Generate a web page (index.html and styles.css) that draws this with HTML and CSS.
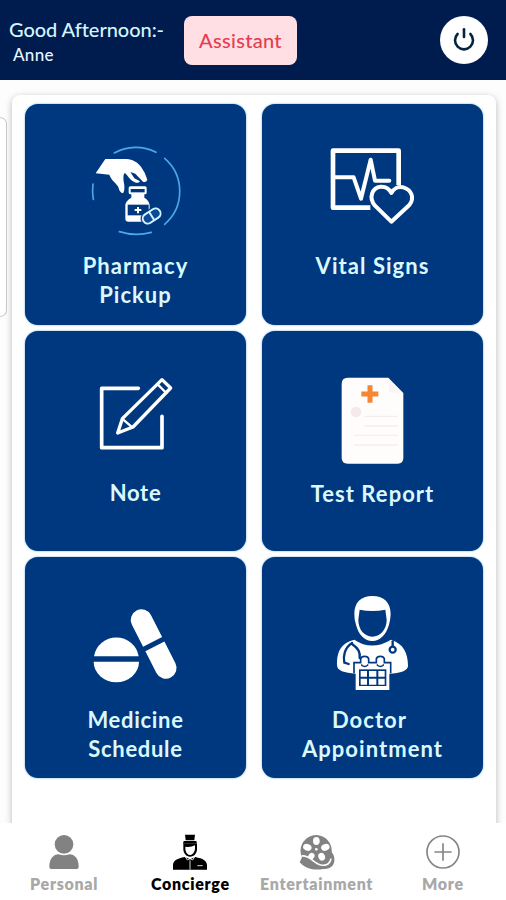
FILE: index.html
```html
<!DOCTYPE html>
<html lang="en">
<head>
    <meta charset="utf-8">
    <title>Concierge</title>
    <link rel="stylesheet" href="styles.css">
</head>
<body>
    <header class="header">
        <div class="greeting">
            <div class="greeting-text">Good Afternoon:-</div>
            <div class="greeting-name">Anne</div>
        </div>
        <button class="assistant-button">Assistant</button>
        <button class="power-button" aria-label="Log out">
            <svg width="24" height="26" viewBox="0 0 24 26" fill="none" stroke="#06233f" stroke-width="2.6" stroke-linecap="round">
                <path d="M12 2.3V10"/>
                <path d="M5.6 7a9 9 0 1 0 12.8 0"/>
            </svg>
        </button>
    </header>

    <main class="main">
        <div class="side-card"></div>
        <div class="panel">
            <a class="tile">
                <svg class="tile-icon" viewBox="15 21 303 300">
                    <g fill="none" stroke="#4aa8e8" stroke-width="5" stroke-linecap="round">
                        <path d="M103 54A131 131 0 0 1 228 52"/>
                        <path d="M254 70A131 131 0 0 1 254 268"/>
                        <path d="M118 290A170 170 0 0 0 214 292"/>
                        <path d="M39 147Q36 170 40 193"/>
                    </g>
                    <path fill="#fff" d="M47 115L76 72H140C158 73 174 82 184 97Q197 115 202 134Q199 143 189 140L166 116L151 111L163 130L180 139Q175 147 163 141C148 133 144 122 134 113Q127 123 133 151Q134 170 129 175Q119 174 115 156C108 143 94 137 88 119Z"/>
                    <path fill="#fff" d="M151 154H195Q200 154 200 159V173Q200 178 195 178H193V188Q208 197 209 211V252Q209 260 201 260H145Q136 260 136 251V209Q138 197 154 188V178H151Q146 178 146 173V159Q146 154 151 154Z"/>
                    <path stroke="#003880" stroke-width="10" d="M152 167H194"/>
                    <path fill="#003880" d="M143 209H206V241H143Z"/>
                    <path stroke="#fff" stroke-width="6" d="M174 216V235M164 225H184"/>
                    <g transform="rotate(-33 215 243)" stroke="#003880">
                        <rect x="180" y="222" width="70" height="42" rx="21" fill="#003880"/>
                        <rect x="186" y="228" width="58" height="30" rx="15" fill="#0b4a96" stroke="#d5f3ff" stroke-width="6"/>
                        <path stroke="#d5f3ff" stroke-width="6" d="M215 228V258"/>
                    </g>
                </svg>
                <span class="tile-label">Pharmacy<br>Pickup</span>
            </a>
            <a class="tile">
                <svg class="tile-icon" viewBox="6 21 303 300" fill="none" stroke="#fff" stroke-width="12" stroke-linejoin="round" stroke-linecap="round">
                    <path stroke-width="14" stroke-linecap="butt" d="M151 218H39V47H236V150"/>
                    <path d="M40 127H101L123 191L152 74L165 137H208"/>
                    <path fill="#003880" d="M214 260L165 212C145 188 156 158 182 155C200 154 209 163 214 174C220 162 233 153 250 157C276 165 284 190 268 210Z"/>
                </svg>
                <span class="tile-label">Vital Signs</span>
            </a>
            <a class="tile">
                <svg class="tile-icon" viewBox="0 12 303 300" fill="none" stroke="#fff" stroke-width="11" stroke-linejoin="round" stroke-linecap="round">
                    <path d="M160 70H50V248H231V154"/>
                    <path stroke-width="10" d="M231 44L257 69L144 186L98 204L112 161Z"/>
                    <path stroke-width="7" d="M218 58L244 84M114 163L142 187"/>
                </svg>
                <span class="tile-label tile-label-narrow">Note</span>
            </a>
            <a class="tile">
                <svg class="tile-icon" viewBox="-9 12 303 300">
                    <path fill="#fffdfc" d="M68 38H190L235 84V279Q235 296 218 296H68Q50 296 50 279V57Q50 38 68 38Z"/>
                    <path fill="#faf5f5" d="M191 46L228 83H202Q191 83 191 72Z"/>
                    <path stroke="#f58634" stroke-width="15" d="M135 61V113M109 87H160"/>
                    <circle cx="93" cy="141" r="16" fill="#f6e9ea"/>
                    <path stroke="#f5eeec" stroke-width="4" d="M118 154H218M118 183H218M86 211H218M86 240H218"/>
                </svg>
                <span class="tile-label tile-label-low">Test Report</span>
            </a>
            <a class="tile">
                <svg class="tile-icon" viewBox="15 0 303 300" fill="#fff">
                    <path d="M42 184A68 68 0 0 1 176 184Z"/>
                    <path d="M41 200H177A68 62 0 0 1 41 200Z"/>
                    <g transform="rotate(-27 221 147)">
                        <path d="M189 140V66A32 32 0 0 1 253 66V140Z"/>
                        <path d="M189 155V228A32 32 0 0 0 253 228V155Z"/>
                    </g>
                </svg>
                <span class="tile-label tile-label-low tile-label-narrow">Medicine<br>Schedule</span>
            </a>
            <a class="tile">
                <svg class="tile-icon" viewBox="6 15 303 300">
                    <path fill="#fff" d="M51 225C51 184 62 160 103 149Q155 184 213 149C250 160 264 190 264 227C264 242 242 249 207 251H108C72 249 51 242 51 225Z"/>
                    <path fill="#fff" d="M103 73C103 37 122 18 157 18C193 18 212 38 212 73Q211 91 207 104C199 132 182 152 157 153C132 152 115 132 108 104Q103 91 103 73Z"/>
                    <path fill="#003880" d="M119 59Q157 67 196 59L200 89C200 120 180 139 157 140C133 139 115 119 115 89Z"/>
                    <g fill="none" stroke="#003880" stroke-width="7" stroke-linecap="round">
                        <path d="M96 159C73 174 69 199 73 218L86 222M96 162C116 176 121 187 119 204"/>
                        <path d="M218 154V168"/>
                        <circle cx="218" cy="179" r="9"/>
                    </g>
                    <path fill="none" stroke="#003880" stroke-width="5" d="M102 250V218H122V206Q124 199 134 199Q144 199 146 206V218H169V206Q171 199 181 199Q191 199 193 206V218H212V250"/>
                    <path fill="#fff" d="M107 223H208V300H107Z"/>
                    <rect x="127" y="203" width="14" height="25" rx="6" fill="#fff"/>
                    <rect x="174" y="203" width="14" height="25" rx="6" fill="#fff"/>
                    <path fill="none" stroke="#003880" stroke-width="4" d="M125 223V226Q134 233 143 226V223M172 223V226Q181 233 190 226V223"/>
                    <path fill="#003880" d="M117 238H199V288H117Z"/>
                    <path fill="#fff" d="M122 243H141V260H122ZM147 243H169V260H147ZM175 243H194V260H175ZM122 266H141V284H122ZM147 266H169V284H147ZM175 266H194V284H175Z"/>
                </svg>
                <span class="tile-label tile-label-low">Doctor&nbsp;<br>Appointment</span>
            </a>
        </div>
    </main>

    <nav class="nav">
        <a class="nav-item">
            <svg class="nav-icon" viewBox="0 0 108 108" fill="#828282">
                <circle cx="54" cy="31" r="28"/>
                <path d="M10 98C10 75 22 61 38 61Q54 67 70 61C87 61 98 75 98 98Q98 105 90 105H18Q10 105 10 98Z"/>
            </svg>
            <span>Personal</span>
        </a>
        <a class="nav-item active">
            <svg class="nav-icon" viewBox="0 0 108 108">
                <path d="M39 2H69L67 19H41ZM35 21H73L75 29H33Z"/>
                <path d="M34 29H75V45C75 58 66 68 54 68C43 68 34 58 34 45Z"/>
                <path fill="#fff" d="M40 38Q54 42 69 34V44C68 55 61 63 54 63C46 63 40 54 40 43Z"/>
                <path d="M3 107V93C4 79 16 73 38 69L54 76L70 69C93 74 104 80 105 93V107Z"/>
                <path fill="none" stroke="#fff" stroke-width="2.5" d="M39 67L46 78L54 74L62 78L69 67M54 79V107M76 95H92"/>
            </svg>
            <span>Concierge</span>
        </a>
        <a class="nav-item">
            <svg class="nav-icon" viewBox="0 0 108 108">
                <path fill="#828282" d="M52 3A47 47 0 0 1 98 54C107 64 109 82 102 93Q93 106 72 105Q60 108 40 106Q16 101 2 85L9 70A47 47 0 0 1 52 3Z"/>
                <g fill="#fff">
                    <ellipse cx="52" cy="21" rx="10" ry="12"/>
                    <ellipse cx="25" cy="40" rx="13" ry="10" transform="rotate(20 25 40)"/>
                    <ellipse cx="79" cy="40" rx="13" ry="10" transform="rotate(-20 79 40)"/>
                    <ellipse cx="37" cy="67" rx="9" ry="11" transform="rotate(30 37 67)"/>
                    <ellipse cx="68" cy="68" rx="10" ry="12" transform="rotate(-20 68 68)"/>
                    <circle cx="52" cy="46" r="4"/>
                </g>
                <path fill="#828282" d="M18 68Q36 71 58 96L46 104L12 78Z"/>
                <path fill="none" stroke="#fff" stroke-width="5" d="M8 66C34 63 42 88 66 93C84 96 94 88 96 74"/>
            </svg>
            <span>Entertainment</span>
        </a>
        <a class="nav-item">
            <svg class="nav-icon" viewBox="0 0 108 108" fill="none" stroke="#858585" stroke-width="5">
                <circle cx="54" cy="54" r="48"/>
                <path d="M54 28V80M28 54H80"/>
            </svg>
            <span>More</span>
        </a>
    </nav>
</body>
</html>
```

FILE: styles.css
```css
* {
    box-sizing: border-box;
}
body {
    margin: 0;
    height: 900px;
    display: flex;
    flex-direction: column;
    overflow: hidden;
    font-family: Lato, "Open Sans", sans-serif;
    background-color: #fff;
}
button {
    border: none;
    padding: 0;
    font-family: inherit;
    cursor: pointer;
}
.header {
    height: 80px;
    flex-shrink: 0;
    display: flex;
    align-items: flex-start;
    padding: 16px 18px 0 9px;
    background-color: #001b4e;
}
.greeting {
    width: 175px;
    color: #d5f5ff;
}
.greeting-text {
    font-size: 20px;
    line-height: 27px;
    font-weight: 500;
    letter-spacing: -0.05px;
    white-space: nowrap;
}
.greeting-name {
    padding-left: 4px;
    font-size: 17px;
    line-height: 24px;
    font-weight: 500;
    letter-spacing: 0.3px;
    color: #e6f7ff;
}
.assistant-button {
    width: 113px;
    height: 49px;
    padding-bottom: 1px;
    border-radius: 8px;
    background-color: #ffdfe3;
    color: #e43d50;
    font-size: 20px;
    font-weight: 500;
    letter-spacing: 0.3px;
}
.power-button {
    width: 48px;
    height: 48px;
    margin-left: auto;
    border-radius: 50%;
    background-color: #fff;
    display: flex;
    align-items: center;
    justify-content: center;
}
.main {
    height: 743px;
    flex-shrink: 0;
    display: flex;
    align-items: flex-start;
    overflow: hidden;
    background-color: #fdfdfd;
}
.side-card {
    width: 7px;
    height: 200px;
    margin: 37px 5px 0 0;
    border: 1px solid #ccc;
    border-left: none;
    border-radius: 0 8px 8px 0;
    background-color: #fff;
}
.panel {
    width: 484px;
    height: 760px;
    margin-top: 15px;
    padding: 9px 13px;
    border-radius: 8px;
    background-color: #fff;
    box-shadow: 0 2px 7px rgba(0, 0, 0, 0.28);
    display: grid;
    grid-template-columns: 221px 221px;
    grid-auto-rows: 220.5px;
    align-content: start;
    gap: 6px 16px;
}
.tile {
    display: flex;
    flex-direction: column;
    align-items: center;
    padding-top: 38px;
    border-radius: 13px;
    background-color: #003880;
    box-shadow: 0 0 2px #4d9fd0;
}
.tile-icon {
    width: 101px;
    height: 100px;
}
.tile-label {
    margin-top: 9px;
    font-size: 22px;
    line-height: 29px;
    font-weight: bold;
    letter-spacing: 1.05px;
    text-align: center;
    color: #dcf8ff;
}
.tile-label-low {
    margin-top: 10px;
}
.tile-label-narrow {
    letter-spacing: 0.7px;
}
.nav {
    flex: 1;
    display: grid;
    grid-template-columns: repeat(4, 1fr);
    padding: 11px 0 0 1px;
    background-color: #fff;
}
.nav-item {
    display: flex;
    flex-direction: column;
    align-items: center;
    font-size: 16px;
    line-height: 20px;
    font-weight: 800;
    letter-spacing: 0.7px;
    color: #a8a8a8;
}
.nav-icon {
    width: 36px;
    height: 36px;
    margin-bottom: 4px;
}
.nav-item.active {
    color: #000;
}
```
